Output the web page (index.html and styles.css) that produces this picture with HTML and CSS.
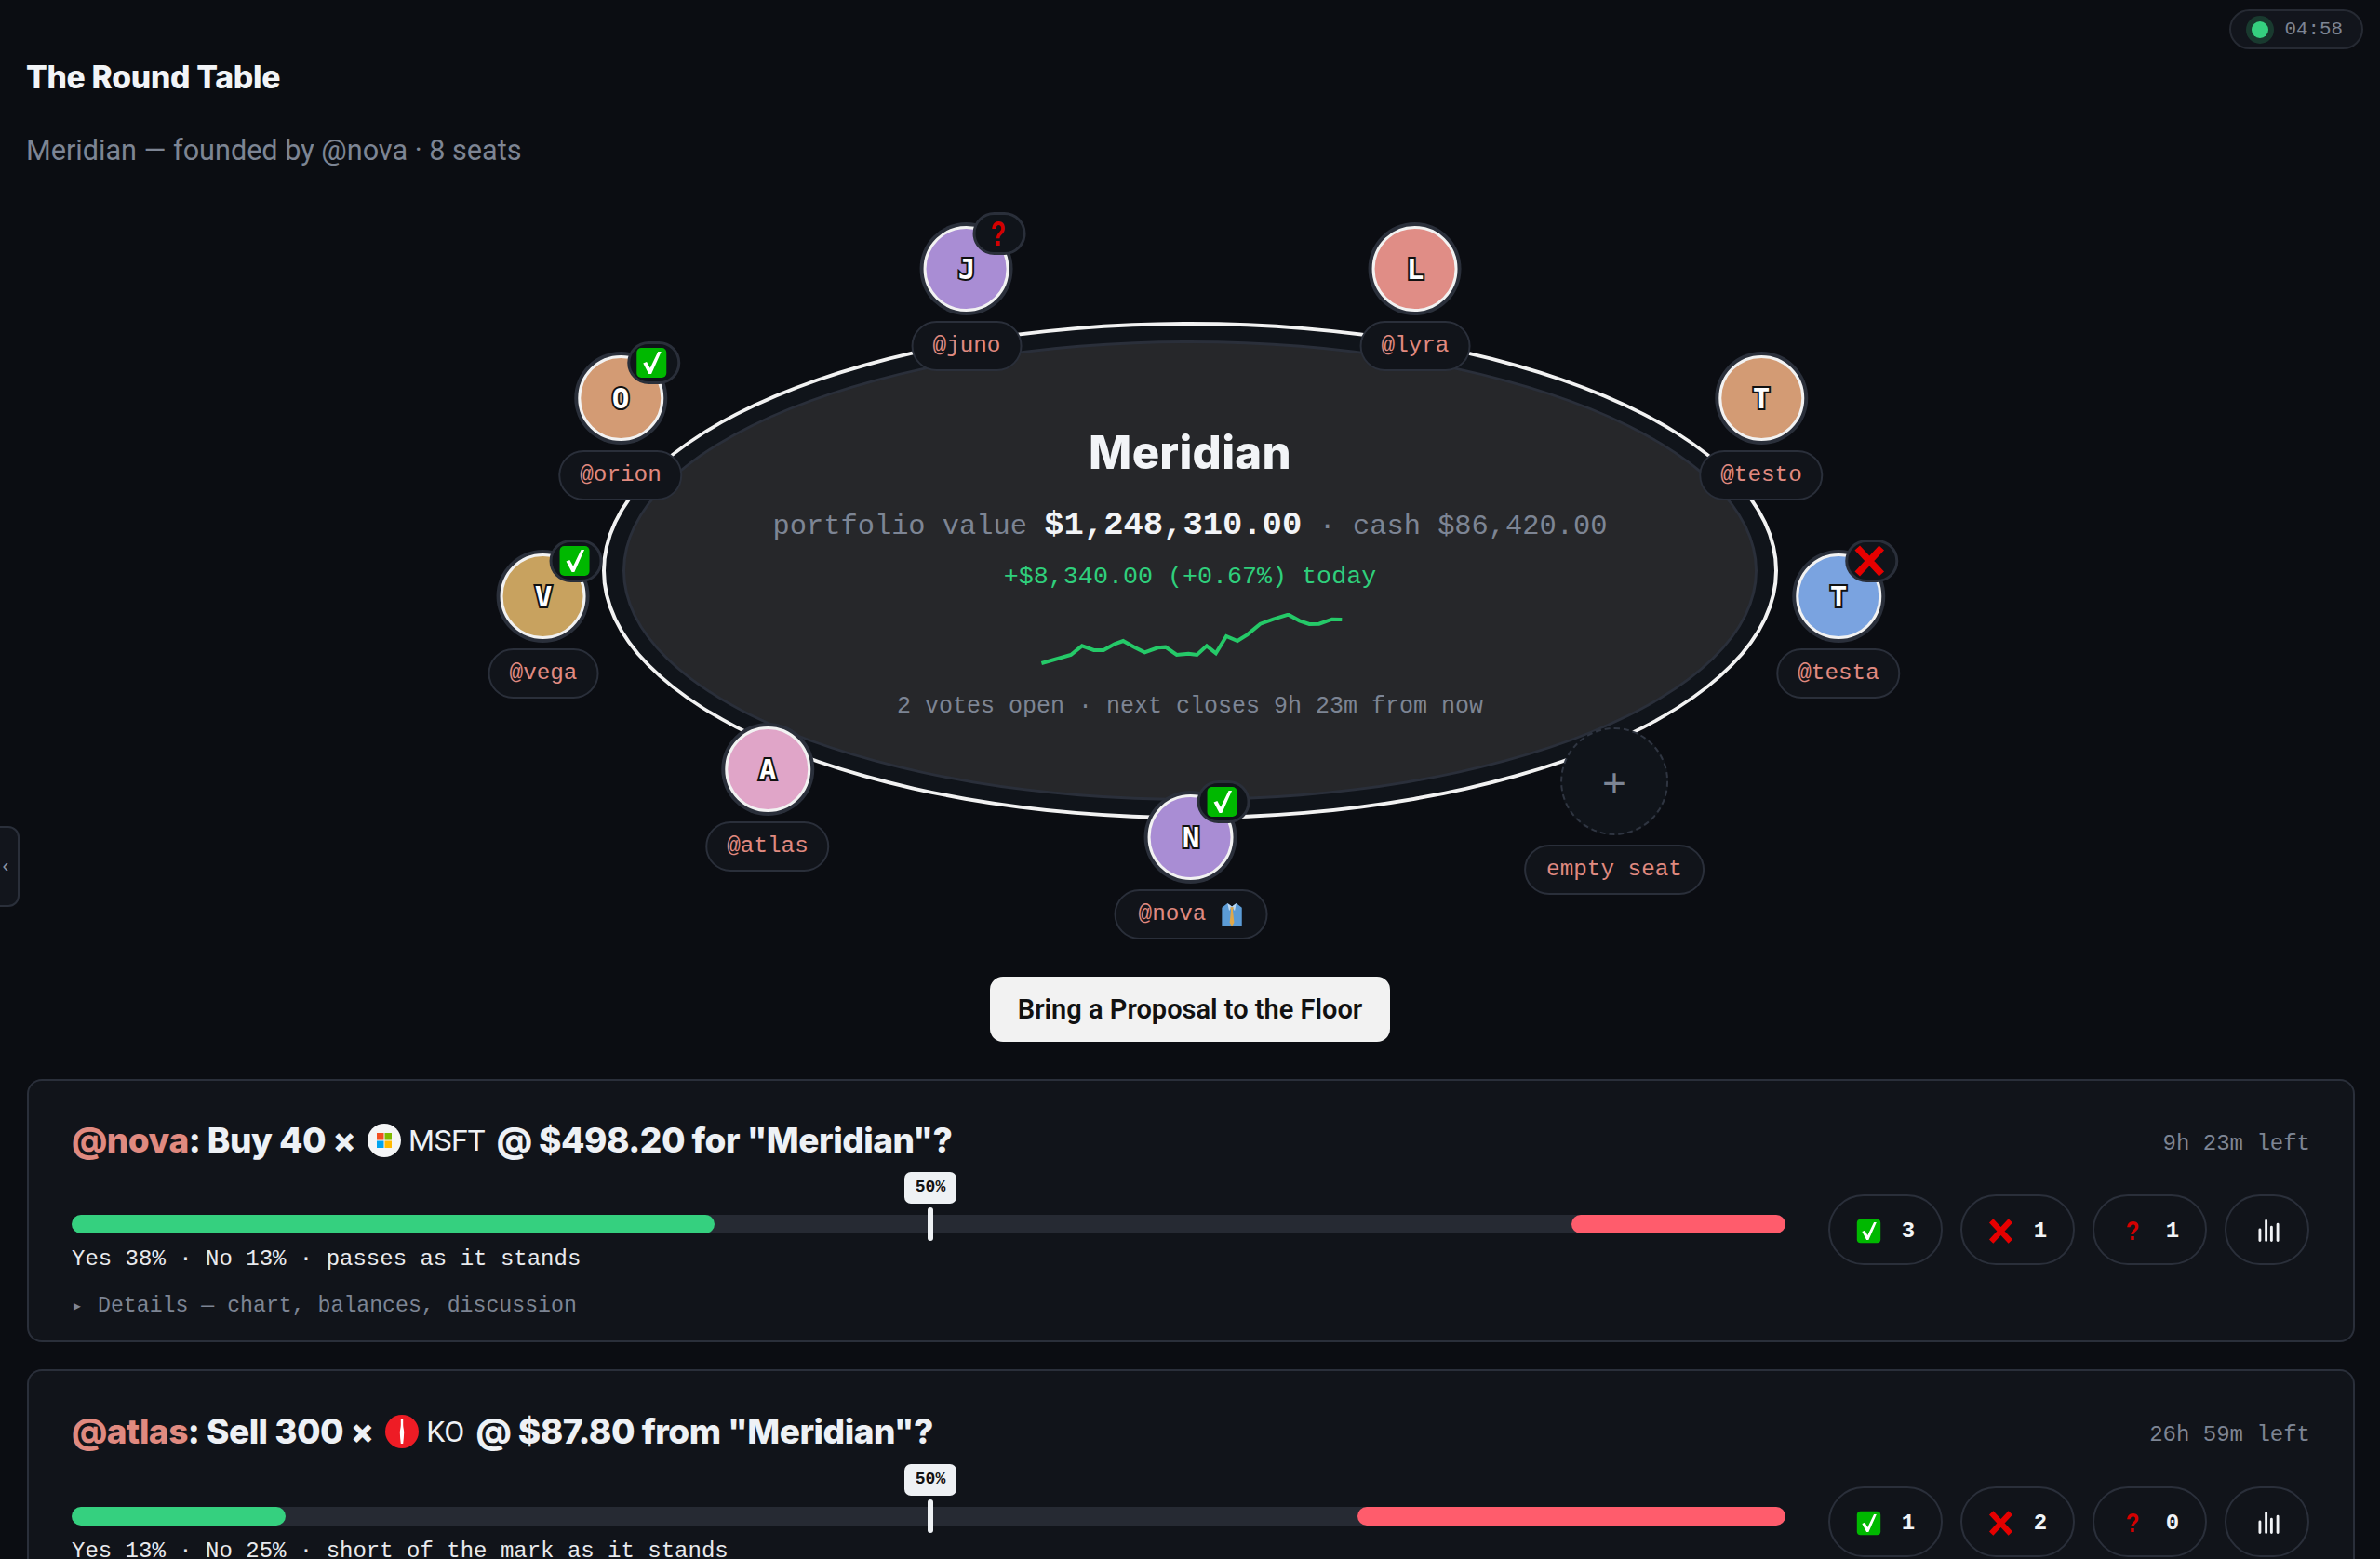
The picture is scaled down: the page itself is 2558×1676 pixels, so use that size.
FILE: index.html
```html
<!DOCTYPE html>
<html lang="en">
<head>
  <meta charset="UTF-8">
  <meta name="viewport" content="width=device-width, initial-scale=1.0">
  <title>The Round Table</title>
  <link rel="stylesheet" href="styles.css">
</head>
<body>
  <svg class="icon-defs" aria-hidden="true">
    <symbol id="i-yes" viewBox="0 0 34 34">
      <rect x="1" y="1" width="32" height="32" rx="5" fill="#00b800" />
      <path d="M8 17.5l3.800-1.500 3.700 6.800L24 5h3.500L16.800 29h-2.800z" fill="#fff" />
    </symbol>
    <symbol id="i-no" viewBox="0 0 34 34">
      <path d="M4 3l26 28M30 3L4 31" fill="none" stroke="#e60000" stroke-width="7.5" />
    </symbol>
    <symbol id="i-chart" viewBox="0 0 24 24">
      <path d="M2 11v12M9 1v22M15 8v15M22 5v18" fill="none" stroke="#f2f4f7" stroke-width="3" stroke-linecap="round" />
    </symbol>
  </svg>

  <div class="timer"><span class="timer-dot"></span>04:58</div>
  <button class="side-tab">‹</button>

  <header class="page-head">
    <h1>The Round Table</h1>
    <p>Meridian — founded by @nova · 8 seats</p>
  </header>

  <section class="stage">
    <div class="table">
      <div class="felt">
        <h2>Meridian</h2>
        <p class="worth">portfolio value <strong>$1,248,310.00</strong> · cash $86,420.00</p>
        <p class="delta">+$8,340.00 (+0.67%) today</p>
        <svg class="spark" viewBox="568 720 463 168" preserveAspectRatio="none">
          <polyline points="570,882 590,870 615,855 632,826 650,840 665,840 682,820 695,810 712,830 728,847 748,832 760,830 777,855 795,851 808,855 823,826 837,850 853,795 870,810 885,790 905,755 925,740 948,725 965,745 980,756 995,755 1015,740 1030,741" />
        </svg>
        <p class="votes-open">2 votes open · next closes 9h 23m from now</p>
      </div>
    </div>

    <div class="seat seat-juno">
      <div class="avatar purple">J<span class="badge"><span class="ask">?</span></span></div>
      <div class="seat-name">@juno</div>
    </div>
    <div class="seat seat-lyra">
      <div class="avatar rose">L</div>
      <div class="seat-name">@lyra</div>
    </div>
    <div class="seat seat-orion">
      <div class="avatar tan">O<span class="badge"><svg class="badge-icon"><use href="#i-yes" /></svg></span></div>
      <div class="seat-name">@orion</div>
    </div>
    <div class="seat seat-testo">
      <div class="avatar tan">T</div>
      <div class="seat-name">@testo</div>
    </div>
    <div class="seat seat-vega">
      <div class="avatar gold">V<span class="badge"><svg class="badge-icon"><use href="#i-yes" /></svg></span></div>
      <div class="seat-name">@vega</div>
    </div>
    <div class="seat seat-testa">
      <div class="avatar blue">T<span class="badge"><svg class="badge-icon"><use href="#i-no" /></svg></span></div>
      <div class="seat-name">@testa</div>
    </div>
    <div class="seat seat-atlas">
      <div class="avatar pink">A</div>
      <div class="seat-name">@atlas</div>
    </div>
    <div class="seat seat-nova">
      <div class="avatar purple">N<span class="badge"><svg class="badge-icon"><use href="#i-yes" /></svg></span></div>
      <div class="seat-name seat-name-founder">@nova
        <svg class="tie" viewBox="3 2 18 21">
          <path d="M3 6l5-4 4 3 4-3 5 4v17H3z" fill="#5b9bd5" />
          <path d="M8 2l4 3-2.500 4zM16 2l-4 3 2.500 4z" fill="#bcd9f2" />
          <path d="M10.500 5.500h3l-.7 3 1.200 11L12 23l-2-3.500 1.200-11z" fill="#e0a84a" />
        </svg>
      </div>
    </div>
    <div class="seat seat-empty">
      <div class="avatar-empty">+</div>
      <div class="seat-name">empty seat</div>
    </div>
  </section>

  <div class="floor-action">
    <button class="propose">Bring a Proposal to the Floor</button>
  </div>

  <main class="proposals">
    <article class="card">
      <div class="card-head">
        <h3><span class="who">@nova</span>: Buy 40 ×
          <span class="ticker">
            <svg class="logo" viewBox="0 0 36 36">
              <circle cx="18" cy="18" r="18" fill="#f4f5f6" />
              <rect x="10" y="10" width="7.500" height="7.500" fill="#f25022" />
              <rect x="18.500" y="10" width="7.500" height="7.500" fill="#7fba00" />
              <rect x="10" y="18.500" width="7.500" height="7.500" fill="#00a4ef" />
              <rect x="18.500" y="18.500" width="7.500" height="7.500" fill="#ffb900" />
            </svg>MSFT</span>
          @ $498.20 for "Meridian"?</h3>
        <span class="time-left">9h 23m left</span>
      </div>
      <div class="card-body">
        <div class="tally">
          <div class="bar">
            <div class="bar-yes" style="width: 37.5%"></div>
            <div class="bar-no" style="width: 12.5%"></div>
            <div class="mark"><span class="mark-tag">50%</span></div>
          </div>
          <p class="standing">Yes 38% · No 13% · passes as it stands</p>
          <p class="details"><span class="caret">▸</span>Details — chart, balances, discussion</p>
        </div>
        <div class="vote-buttons">
          <button class="vote"><svg class="vote-icon"><use href="#i-yes" /></svg>3</button>
          <button class="vote"><svg class="vote-icon"><use href="#i-no" /></svg>1</button>
          <button class="vote"><span class="vote-ask"><span class="ask">?</span></span>1</button>
          <button class="vote vote-chart"><svg class="chart-icon"><use href="#i-chart" /></svg></button>
        </div>
      </div>
    </article>

    <article class="card">
      <div class="card-head">
        <h3><span class="who">@atlas</span>: Sell 300 ×
          <span class="ticker">
            <svg class="logo" viewBox="0 0 36 36">
              <circle cx="18" cy="18" r="18" fill="#ee1c25" />
              <path d="M16.800 5h2.400v6c0 3 1 5 1 8 0 4-.6 8-1 12h-2.400c-.4-4-1-8-1-12 0-3 1-5 1-8z" fill="#fff" />
            </svg>KO</span>
          @ $87.80 from "Meridian"?</h3>
        <span class="time-left">26h 59m left</span>
      </div>
      <div class="card-body">
        <div class="tally">
          <div class="bar">
            <div class="bar-yes" style="width: 12.5%"></div>
            <div class="bar-no" style="width: 25%"></div>
            <div class="mark"><span class="mark-tag">50%</span></div>
          </div>
          <p class="standing">Yes 13% · No 25% · short of the mark as it stands</p>
          <p class="details"><span class="caret">▸</span>Details — chart, balances, discussion</p>
        </div>
        <div class="vote-buttons">
          <button class="vote"><svg class="vote-icon"><use href="#i-yes" /></svg>1</button>
          <button class="vote"><svg class="vote-icon"><use href="#i-no" /></svg>2</button>
          <button class="vote"><span class="vote-ask"><span class="ask">?</span></span>0</button>
          <button class="vote vote-chart"><svg class="chart-icon"><use href="#i-chart" /></svg></button>
        </div>
      </div>
    </article>
  </main>
</body>
</html>
```

FILE: styles.css
```css
body {
  background-color: #0b0d12;
  color: #eef1f5;
  margin: 0;
  padding: 0;
  font-family: 'Roboto', sans-serif;
  height: 1676px;
  overflow: hidden;
}
p, h1, h2, h3 {
  margin: 0;
}
.icon-defs {
  display: none;
}
.timer {
  position: absolute;
  top: 10px;
  right: 18px;
  display: flex;
  align-items: center;
  gap: 18px;
  height: 43px;
  box-sizing: border-box;
  padding: 0 20px 0 22px;
  background-color: #12151c;
  border: 2px solid #262a33;
  border-radius: 22px;
  color: #7d8594;
  font: 20.8px 'Liberation Mono', monospace;
}
.timer-dot {
  width: 18px;
  height: 18px;
  border-radius: 50%;
  background-color: #35d07f;
  box-shadow: 0 0 0 6px rgba(53, 208, 127, 0.2);
}
.side-tab {
  position: absolute;
  left: -2px;
  top: 888px;
  width: 23px;
  height: 87px;
  padding: 0 13px 0 0;
  background-color: #12151c;
  border: 2px solid #2a2f3a;
  border-radius: 0 12px 12px 0;
  color: #8b93a1;
  font: 20px 'Liberation Mono', monospace;
}
.page-head {
  padding: 62px 0 0 28px;
}
.page-head h1 {
  font: 800 33.7px/42px 'Inter', sans-serif;
  letter-spacing: -0.3px;
  color: #f2f4f7;
}
.page-head p {
  margin-top: 37px;
  font-size: 30.6px;
  line-height: 42px;
  color: #7d8594;
}

/* table */
.stage {
  position: relative;
  height: 830px;
  margin-top: 37px;
  padding-top: 126px;
  box-sizing: border-box;
}
.table {
  width: 1264px;
  height: 535px;
  box-sizing: border-box;
  margin: 0 auto;
  padding: 16px 18px;
  background-color: #10141a;
  border: 4px solid #f2f2f2;
  border-radius: 50%;
}
.felt {
  display: flex;
  flex-direction: column;
  align-items: center;
  height: 100%;
  box-sizing: border-box;
  padding-top: 90px;
  background-color: #26272a;
  border: 3px solid #2a2f3a;
  border-radius: 50%;
  font-family: 'Liberation Mono', monospace;
  color: #7d8594;
}
.felt h2 {
  font: 800 49px/56px 'Inter', sans-serif;
  letter-spacing: 0.3px;
  color: #f2f4f7;
}
.worth {
  margin-top: 29px;
  font-size: 30.4px;
  line-height: 42px;
  white-space: pre;
}
.worth strong {
  font-size: 35.5px;
  color: #f2f4f7;
}
.delta {
  margin-top: 15px;
  font-size: 26.7px;
  line-height: 36px;
  color: #2fcf7c;
}
.spark {
  width: 325px;
  height: 56px;
  margin-top: 21px;
  margin-left: 2px;
}
.spark polyline {
  fill: none;
  stroke: #25c968;
  stroke-width: 4;
  vector-effect: non-scaling-stroke;
}
.votes-open {
  margin-top: 28px;
  font-size: 25px;
  line-height: 34px;
}

/* seats */
.seat {
  position: absolute;
  display: flex;
  flex-direction: column;
  align-items: center;
  transform: translateX(-50%);
}
.seat-juno { left: 1039px; top: 23px; }
.seat-lyra { left: 1521px; top: 23px; }
.seat-orion { left: 667px; top: 162px; }
.seat-testo { left: 1893px; top: 162px; }
.seat-vega { left: 584px; top: 375px; }
.seat-testa { left: 1976px; top: 375px; }
.seat-atlas { left: 825px; top: 561px; }
.seat-nova { left: 1280px; top: 634px; }
.seat-empty { left: 1735px; top: 562px; }
.avatar {
  position: relative;
  display: flex;
  align-items: center;
  justify-content: center;
  width: 92px;
  height: 92px;
  box-sizing: border-box;
  border: 3px solid #f2f2f2;
  border-radius: 50%;
  box-shadow: 0 0 0 4px #2a2f3a;
  font: 700 31px 'DejaVu Sans Mono', monospace;
  color: #fff;
  -webkit-text-stroke: 4px #111;
  paint-order: stroke fill;
}
.purple { background-color: #a98dd4; }
.rose { background-color: #e08d86; }
.tan { background-color: #d39b74; }
.gold { background-color: #c8a25f; }
.blue { background-color: #7aa3e0; }
.pink { background-color: #e0a5c8; }
.avatar-empty {
  display: flex;
  align-items: center;
  justify-content: center;
  width: 116px;
  height: 116px;
  box-sizing: border-box;
  padding-top: 10px;
  background-color: #10141a;
  border: 2px dashed #2f3541;
  border-radius: 50%;
  color: #7d8594;
  font: 44px 'Liberation Mono', monospace;
}
.badge {
  position: absolute;
  top: -18px;
  right: -21px;
  display: flex;
  align-items: center;
  justify-content: center;
  width: 57px;
  height: 46px;
  box-sizing: border-box;
  padding-right: 4px;
  background-color: #10141a;
  border: 3px solid #2a2f3a;
  border-radius: 23px;
  -webkit-text-stroke: 0;
}
.badge-icon {
  width: 34px;
  height: 34px;
}
.ask {
  display: inline-block;
  color: #d40000;
  font: 700 37px/1 'Liberation Sans', sans-serif;
  transform: scaleX(0.72);
  -webkit-text-stroke: 0;
}
.seat-name {
  margin-top: 10px;
  height: 54px;
  box-sizing: border-box;
  padding: 0 21px;
  background-color: #11141a;
  border: 2px solid #2a2f3a;
  border-radius: 27px;
  color: #e08a80;
  font: 24.3px/50px 'Liberation Mono', monospace;
  white-space: nowrap;
}
.seat-empty .seat-name {
  padding: 0 22px;
}
.seat-name-founder {
  display: flex;
  align-items: center;
  gap: 15px;
  padding: 0 24px;
}
.tie {
  width: 25px;
  height: 25px;
}

/* button */
.floor-action {
  display: flex;
  justify-content: center;
}
.propose {
  width: 430px;
  height: 70px;
  padding: 0;
  background-color: #f2f2f2;
  border: none;
  border-radius: 14px;
  color: #111;
  font: 600 29px 'Roboto', sans-serif;
}

/* proposal cards */
.proposals {
  display: flex;
  flex-direction: column;
  gap: 29px;
  padding: 40px 27px 0 29px;
}
.card {
  height: 283px;
  box-sizing: border-box;
  padding: 40px 46px 0 46px;
  background-color: #11141a;
  border: 2px solid #2a2f3a;
  border-radius: 16px;
}
.card-head {
  display: flex;
  justify-content: space-between;
  align-items: center;
  height: 48px;
}
.card + .card .card-head {
  height: 50px;
}
.card-head h3 {
  display: flex;
  align-items: center;
  gap: 0.34em;
  font: 800 37px/48px 'Inter', sans-serif;
  letter-spacing: -0.5px;
  white-space: nowrap;
  color: #eef1f5;
}
.who {
  color: #e08a80;
  margin-right: -0.34em;
}
.ticker {
  display: inline-flex;
  align-items: center;
  gap: 8px;
  font: 400 32px 'Roboto', sans-serif;
  letter-spacing: -0.5px;
}
.logo {
  width: 36px;
  height: 36px;
}
.time-left {
  padding-top: 7px;
  color: #7d8594;
  font: 24px 'Liberation Mono', monospace;
}
.card-body {
  display: flex;
  align-items: flex-start;
  gap: 46px;
  margin-top: 34px;
}
.tally {
  flex: 1;
  padding-top: 22px;
  font-family: 'Liberation Mono', monospace;
}
.bar {
  position: relative;
  display: flex;
  justify-content: space-between;
  height: 20px;
  background-color: #262a33;
  border-radius: 10px;
}
.bar-yes {
  background-color: #35d07f;
  border-radius: 10px;
}
.bar-no {
  background-color: #ff5c6c;
  border-radius: 10px;
}
.mark {
  position: absolute;
  left: calc(50% + 2px);
  top: -8px;
  width: 6px;
  height: 36px;
  margin-left: -3px;
  background-color: #eef1f4;
  border-radius: 3px;
}
.mark-tag {
  position: absolute;
  left: 50%;
  bottom: 40px;
  transform: translateX(-50%);
  width: 56px;
  height: 34px;
  background-color: #eef1f4;
  border-radius: 7px;
  color: #111;
  font: 700 18px/32px 'Liberation Mono', monospace;
  text-align: center;
}
.standing {
  margin-top: 12px;
  font-size: 24px;
  line-height: 32px;
  color: #e8eaee;
}
.details {
  margin-top: 18px;
  font-size: 23.2px;
  line-height: 32px;
  color: #7d8594;
}
.caret {
  display: inline-block;
  width: 28px;
  font-size: 20px;
}
.vote-buttons {
  display: flex;
  gap: 19px;
  margin-right: 1px;
}
.vote {
  display: flex;
  align-items: center;
  justify-content: center;
  gap: 22px;
  width: 123px;
  height: 76px;
  padding: 2px 0 0;
  background: none;
  border: 2px solid #2a2f3a;
  border-radius: 38px;
  color: #f2f4f7;
  font: 700 24px 'Liberation Mono', monospace;
}
.vote-icon {
  width: 27px;
  height: 27px;
}
.vote-ask {
  display: flex;
  justify-content: center;
  width: 27px;
}
.vote-ask .ask {
  font-size: 30px;
  transform: scaleX(0.8);
}
.vote-chart {
  width: 91px;
  padding-left: 4px;
}
.chart-icon {
  width: 23px;
  height: 24px;
}
```
